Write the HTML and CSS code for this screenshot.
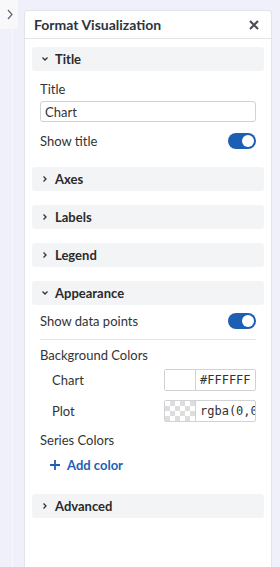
FILE: index.html
```html
<!DOCTYPE html>
<html>
<head>
    <title>Format Visualization</title>
    <link rel="stylesheet" href="styles.css">
</head>
<body>
    <div class="page">
        <div class="rail">
            <div class="rail-tab">
                <svg width="6" height="11" viewBox="0 0 6 11"><polyline points="1,1 5,5.5 1,10" fill="none" stroke="#5b6478" stroke-width="1.2"/></svg>
            </div>
        </div>
        <div class="panel">
            <div class="panel-header">
                <span class="panel-title">Format Visualization</span>
                <svg class="close" width="10" height="10" viewBox="0 0 10 10"><path d="M1 1L9 9M9 1L1 9" stroke="#4a4f57" stroke-width="2.2"/></svg>
            </div>
            <div class="panel-body">
                <div class="section">
                    <div class="section-header">
                        <svg class="chev" width="8" height="8" viewBox="0 0 8 8"><polyline points="1.5,2.5 4,5 6.5,2.5" fill="none" stroke="#333" stroke-width="1.3"/></svg>
                        Title
                    </div>
                    <div class="section-content">
                        <div class="field-label">Title</div>
                        <input class="text-input" type="text" value="Chart">
                        <div class="toggle-row">
                            <span>Show title</span>
                            <span class="toggle"><span class="knob"></span></span>
                        </div>
                    </div>
                </div>
                <div class="section">
                    <div class="section-header">
                        <svg class="chev" width="8" height="8" viewBox="0 0 8 8"><polyline points="2.5,1.5 5,4 2.5,6.5" fill="none" stroke="#333" stroke-width="1.3"/></svg>
                        Axes
                    </div>
                </div>
                <div class="section">
                    <div class="section-header">
                        <svg class="chev" width="8" height="8" viewBox="0 0 8 8"><polyline points="2.5,1.5 5,4 2.5,6.5" fill="none" stroke="#333" stroke-width="1.3"/></svg>
                        Labels
                    </div>
                </div>
                <div class="section">
                    <div class="section-header">
                        <svg class="chev" width="8" height="8" viewBox="0 0 8 8"><polyline points="2.5,1.5 5,4 2.5,6.5" fill="none" stroke="#333" stroke-width="1.3"/></svg>
                        Legend
                    </div>
                </div>
                <div class="section">
                    <div class="section-header">
                        <svg class="chev" width="8" height="8" viewBox="0 0 8 8"><polyline points="1.5,2.5 4,5 6.5,2.5" fill="none" stroke="#333" stroke-width="1.3"/></svg>
                        Appearance
                    </div>
                    <div class="section-content appearance">
                        <div class="toggle-row first">
                            <span>Show data points</span>
                            <span class="toggle"><span class="knob"></span></span>
                        </div>
                        <div class="divider"></div>
                        <div class="field-label">Background Colors</div>
                        <div class="color-row">
                            <span class="color-name">Chart</span>
                            <div class="color-input">
                                <span class="swatch"></span>
                                <span class="color-text">#FFFFFF</span>
                            </div>
                        </div>
                        <div class="color-row">
                            <span class="color-name">Plot</span>
                            <div class="color-input">
                                <span class="swatch checker"></span>
                                <span class="color-text">rgba(0,0,0,0)</span>
                            </div>
                        </div>
                        <div class="field-label series">Series Colors</div>
                        <div class="add-color">
                            <svg width="10" height="10" viewBox="0 0 10 10"><path d="M5 0V10M0 5H10" stroke="#1d5fb3" stroke-width="1.8"/></svg>
                            <span>Add color</span>
                        </div>
                    </div>
                </div>
                <div class="section">
                    <div class="section-header">
                        <svg class="chev" width="8" height="8" viewBox="0 0 8 8"><polyline points="2.5,1.5 5,4 2.5,6.5" fill="none" stroke="#333" stroke-width="1.3"/></svg>
                        Advanced
                    </div>
                </div>
            </div>
        </div>
    </div>
</body>
</html>
```
FILE: styles.css
```css
body {
    margin: 0;
    padding: 0;
    background-color: #eff0f9;
    font-family: Lato, "Open Sans", sans-serif;
    color: #333;
    font-size: 13px;
}
.page {
    display: flex;
    height: 100vh;
}
.rail {
    width: 12px;
    border-right: 1px solid #f7f7fc;
    flex-shrink: 0;
}
.rail-tab {
    height: 29px;
    width: 18px;
    background-color: #f8f8fb;
    border-bottom-right-radius: 4px;
    display: flex;
    align-items: center;
    justify-content: flex-end;
    box-sizing: border-box;
    position: relative;
    z-index: 1;
}
.rail-tab svg {
    margin-right: 5px;
}
.panel {
    margin: 10px 8px 0 11px;
    width: 248px;
    background-color: white;
    border: 1px solid #e2e4ea;
    border-bottom: none;
    border-radius: 4px 4px 0 0;
    box-sizing: border-box;
}
.panel-header {
    height: 27px;
    display: flex;
    align-items: center;
    justify-content: space-between;
    padding: 0 12px 0 9px;
    border-bottom: 1px solid #e2e4ea;
}
.panel-title {
    font-size: 14px;
    font-weight: bold;
    color: #2d3540;
}
.panel-body {
    padding: 8px 7px 0 7px;
}
.section {
    margin-bottom: 14px;
}
.section-header {
    height: 24px;
    background-color: #f3f4f6;
    border-radius: 3px;
    display: flex;
    align-items: center;
    padding-left: 9px;
    font-weight: bold;
    color: #2a2a2a;
}
.chev {
    margin-right: 6px;
}
.section-content {
    padding: 10px 8px 4px 8px;
}
.field-label {
    line-height: 16px;
    margin-bottom: 4px;
}
.text-input {
    width: 100%;
    height: 21px;
    box-sizing: border-box;
    border: 1px solid #cfd2d6;
    border-radius: 3px;
    padding: 0 4px;
    font-family: Lato, sans-serif;
    font-size: 13px;
    color: #333;
}
.toggle-row {
    display: flex;
    justify-content: space-between;
    align-items: center;
    height: 16px;
    margin-top: 11px;
}
.toggle-row.first {
    margin-top: 0;
}
.toggle {
    width: 28px;
    height: 16px;
    border-radius: 8px;
    background-color: #1d5fb3;
    display: flex;
    align-items: center;
    justify-content: flex-end;
    padding-right: 2px;
    box-sizing: border-box;
}
.knob {
    width: 12px;
    height: 12px;
    border-radius: 50%;
    background-color: white;
}
.appearance {
    padding-top: 8px;
    padding-bottom: 7px;
}
.divider {
    height: 1px;
    background-color: #e2e4e8;
    margin: 10px 0 7px 0;
}
.field-label.series {
    margin-top: 10px;
    margin-bottom: 9px;
}
.color-row {
    display: flex;
    justify-content: space-between;
    align-items: center;
    margin: 6px 0 9px 0;
}
.color-row + .color-row {
    margin-top: 0;
    margin-bottom: 0;
}
.color-name {
    padding-left: 12px;
}
.color-input {
    display: flex;
    width: 92px;
    height: 22px;
    border: 1px solid #cfd2d6;
    border-radius: 2px;
    box-sizing: border-box;
    overflow: hidden;
}
.swatch {
    width: 30px;
    border-right: 1px solid #cfd2d6;
    background-color: white;
    flex-shrink: 0;
}
.swatch.checker {
    background-color: #fff;
    background-image:
        linear-gradient(45deg, #ddd 25%, transparent 25%, transparent 75%, #ddd 75%),
        linear-gradient(45deg, #ddd 25%, transparent 25%, transparent 75%, #ddd 75%);
    background-size: 10px 10px;
    background-position: 0 0, 5px 5px;
}
.color-text {
    font-family: "DejaVu Sans Mono", monospace;
    font-size: 12px;
    padding-left: 4px;
    line-height: 20px;
    white-space: nowrap;
    overflow: hidden;
    color: #333;
}
.add-color {
    display: flex;
    align-items: center;
    height: 16px;
    padding-left: 10px;
    color: #1d5fb3;
    font-weight: bold;
}
.add-color svg {
    margin-right: 7px;
}
```
